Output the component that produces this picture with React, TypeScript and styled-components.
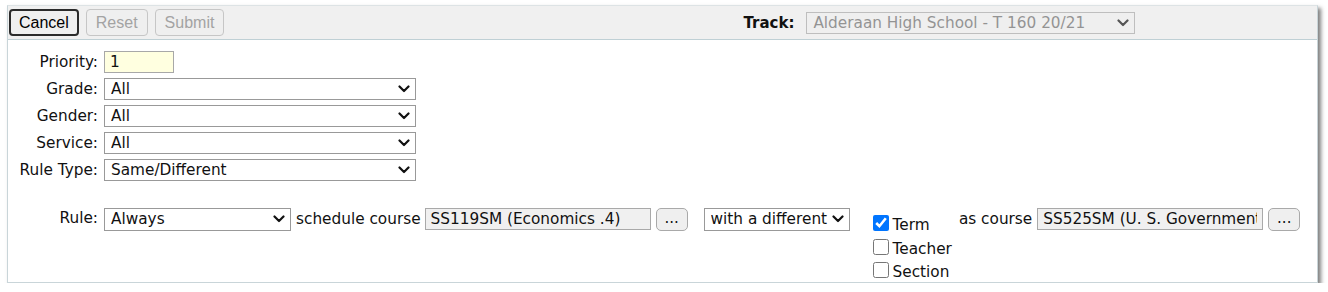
import React from 'react';
import styled, { createGlobalStyle } from 'styled-components';

const GlobalStyle = createGlobalStyle`
  html, body {
    margin: 0;
    padding: 0;
    background: #fff;
  }
  body {
    font-family: "DejaVu Sans", Verdana, sans-serif;
    font-size: 15.3px;
    color: #111;
  }
`;

const Panel = styled.div`
  width: 1311px;
  height: 278px;
  margin: 5px 0 0 7px;
  box-sizing: border-box;
  border: 1px solid #c9d5d9;
  border-top-color: #dde3e5;
  box-shadow: 3px 3px 4px rgba(0, 0, 0, 0.5);
  background: #fff;
  display: flex;
  flex-direction: column;
`;

const Toolbar = styled.div`
  display: flex;
  align-items: center;
  height: 36px;
  box-sizing: border-box;
  padding: 1px 1px 0;
  background: #f0f0f0;
  border-bottom: 1px solid #bfd0d5;
`;

const ButtonGroup = styled.div`
  display: flex;
  gap: 7px;
`;

const ToolButton = styled.button<{ $primary?: boolean }>`
  height: 27px;
  box-sizing: border-box;
  padding: 0 ${(p) => (p.$primary ? '8px' : '9px')};
  font-family: "Liberation Sans", Arial, sans-serif;
  font-size: 16px;
  border-radius: 4px;
  background: #efefef;
  color: ${(p) => (p.$primary ? '#000' : '#a3a3a3')};
  border: ${(p) => (p.$primary ? '2px solid #2b2b2b' : '1px solid #c6c6c6')};
  cursor: ${(p) => (p.$primary ? 'pointer' : 'default')};
`;

const TrackGroup = styled.div`
  display: flex;
  align-items: center;
  gap: 12px;
  margin-left: 519px;
`;

const TrackLabel = styled.span`
  font-weight: bold;
  font-size: 15px;
  color: #111;
`;

const SelectWrap = styled.div<{ $width: number }>`
  position: relative;
  width: ${(p) => p.$width}px;
  flex: none;
`;

const NativeSelect = styled.select<{ $muted?: boolean; $tall?: boolean }>`
  appearance: none;
  -webkit-appearance: none;
  width: 100%;
  height: ${(p) => (p.$tall ? '23px' : '22px')};
  box-sizing: border-box;
  margin: 0;
  padding: 0 16px 0 6px;
  font-family: "DejaVu Sans", Verdana, sans-serif;
  font-size: 15.3px;
  border-radius: 0;
  outline: none;
  border: 1px solid ${(p) => (p.$muted ? '#a9a9a9' : '#999')};
  background: ${(p) => (p.$muted ? '#efefef' : '#fff')};
  color: ${(p) => (p.$muted ? '#6d6d6d' : '#111')};
`;

const Chevron = styled.svg<{ $muted?: boolean }>`
  position: absolute;
  right: 6px;
  top: 50%;
  margin-top: -4px;
  width: 12px;
  height: 8px;
  pointer-events: none;
  stroke: ${(p) => (p.$muted ? '#555' : '#111')};
`;

const Select = ({
  width,
  value,
  muted,
  tall,
}: {
  width: number;
  value: string;
  muted?: boolean;
  tall?: boolean;
}) => (
  <SelectWrap $width={width}>
    <NativeSelect $muted={muted} $tall={tall} defaultValue={value} disabled={muted}>
      <option>{value}</option>
    </NativeSelect>
    <Chevron $muted={muted} viewBox="0 0 12 8" fill="none" strokeWidth="2.2" strokeLinecap="round" strokeLinejoin="round">
      <polyline points="1.5,1.5 6,6 10.5,1.5" />
    </Chevron>
  </SelectWrap>
);

const Body = styled.div`
  padding: 11px 0 0 10px;
  display: grid;
  grid-template-columns: 80px 1fr;
  column-gap: 6px;
  row-gap: 5px;
  align-items: center;
`;

const Label = styled.label<{ $rule?: boolean }>`
  justify-self: end;
  white-space: nowrap;
  color: #111;
  ${(p) => (p.$rule ? 'align-self: start; margin-top: 22px; padding-top: 1px;' : '')}
`;

const TextInput = styled.input<{ $width: number; $tone: 'yellow' | 'grey' }>`
  width: ${(p) => p.$width}px;
  height: 22px;
  box-sizing: border-box;
  margin: 0;
  padding: 0 5px;
  flex: none;
  font-family: "DejaVu Sans", Verdana, sans-serif;
  font-size: 15.3px;
  color: #111;
  border: 1px solid ${(p) => (p.$tone === 'yellow' ? '#a8a8a8' : '#a9a9a9')};
  background: ${(p) => (p.$tone === 'yellow' ? '#ffffe0' : '#f0f0f0')};
  outline: none;
`;

const RuleRow = styled.div`
  display: flex;
  align-items: flex-start;
  margin-top: 22px;
`;

const Inline = styled.span<{ $gapLeft: number }>`
  margin-left: ${(p) => p.$gapLeft}px;
  line-height: 23px;
  white-space: nowrap;
  flex: none;
`;

const Spaced = styled.div<{ $gapLeft: number }>`
  margin-left: ${(p) => p.$gapLeft}px;
  display: flex;
  flex: none;
`;

const DotsButton = styled.button`
  width: 32px;
  height: 23px;
  box-sizing: border-box;
  margin: 0;
  padding: 0 0 3px;
  font-family: "DejaVu Sans", Verdana, sans-serif;
  font-size: 15px;
  color: #111;
  background: #efefef;
  border: 1px solid #a9a9a9;
  border-radius: 5px;
`;

const CheckList = styled.div`
  display: flex;
  flex-direction: column;
  margin-top: 4px;
  flex: none;
`;

const CheckItem = styled.label`
  display: flex;
  align-items: center;
  height: 23.5px;
  white-space: nowrap;
`;

const Check = styled.input`
  width: 16px;
  height: 16px;
  margin: 0 4px 0 0;
  accent-color: #0075ff;
`;

const CheckText = styled.span`
  padding-top: 4px;
`;

const options = ['Term', 'Teacher', 'Section'];

export default function App() {
  return (
    <>
      <GlobalStyle />
      <Panel>
        <Toolbar>
          <ButtonGroup>
            <ToolButton $primary>Cancel</ToolButton>
            <ToolButton disabled>Reset</ToolButton>
            <ToolButton disabled>Submit</ToolButton>
          </ButtonGroup>
          <TrackGroup>
            <TrackLabel>Track:</TrackLabel>
            <Select width={329} value="Alderaan High School - T 160 20/21" muted />
          </TrackGroup>
        </Toolbar>
        <Body>
          <Label>Priority:</Label>
          <div>
            <TextInput $width={70} $tone="yellow" defaultValue="1" />
          </div>
          <Label>Grade:</Label>
          <Select width={312} value="All" />
          <Label>Gender:</Label>
          <Select width={312} value="All" />
          <Label>Service:</Label>
          <Select width={312} value="All" />
          <Label>Rule Type:</Label>
          <Select width={312} value="Same/Different" />
          <Label $rule>Rule:</Label>
          <RuleRow>
            <Select width={187} value="Always" tall />
            <Inline $gapLeft={5}>schedule course</Inline>
            <Spaced $gapLeft={4}>
              <TextInput $width={226} $tone="grey" readOnly defaultValue="SS119SM (Economics .4)" />
            </Spaced>
            <Spaced $gapLeft={5}>
              <DotsButton>...</DotsButton>
            </Spaced>
            <Spaced $gapLeft={16}>
              <Select width={146} value="with a different" tall />
            </Spaced>
            <Spaced $gapLeft={23}>
              <CheckList>
                {options.map((o, i) => (
                  <CheckItem key={o}>
                    <Check type="checkbox" defaultChecked={i === 0} />
                    <CheckText>{o}</CheckText>
                  </CheckItem>
                ))}
              </CheckList>
            </Spaced>
            <Inline $gapLeft={7}>as course</Inline>
            <Spaced $gapLeft={5}>
              <TextInput $width={226} $tone="grey" readOnly defaultValue="SS525SM (U. S. Government)" />
            </Spaced>
            <Spaced $gapLeft={5}>
              <DotsButton>...</DotsButton>
            </Spaced>
          </RuleRow>
        </Body>
      </Panel>
    </>
  );
}
